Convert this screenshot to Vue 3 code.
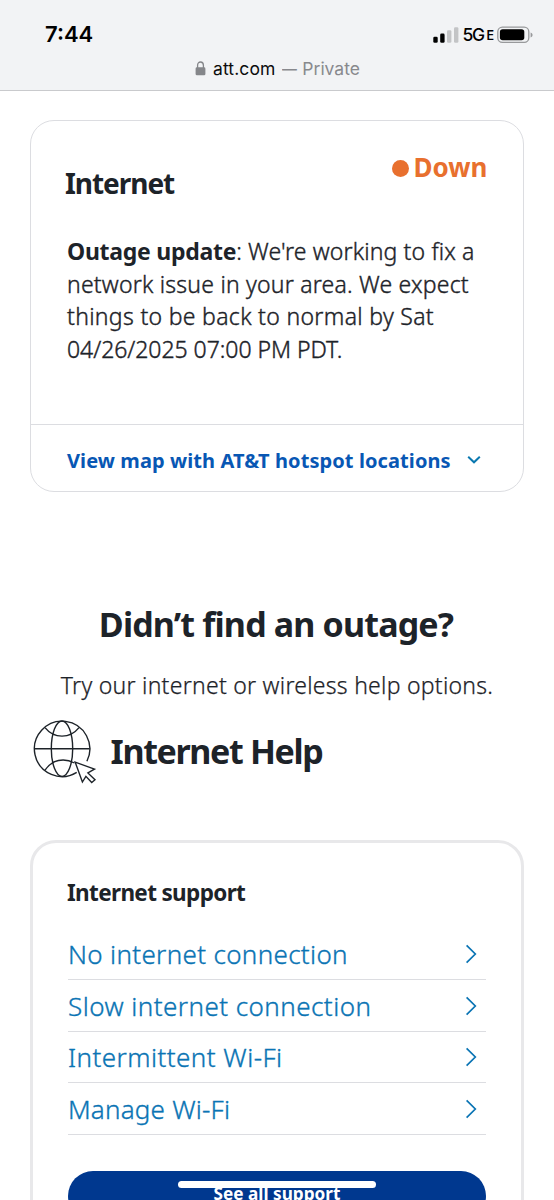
<script setup>
const links = [
  { label: 'No internet connection', cls: 'l1' },
  { label: 'Slow internet connection', cls: 'l2' },
  { label: 'Intermittent Wi-Fi', cls: 'l3' },
  { label: 'Manage Wi-Fi', cls: 'l4' },
]
</script>

<template>
  <div class="phone">
    <header class="top">
      <div class="status">
        <span class="time">7:44</span>
        <div class="indicators">
          <svg class="signal" width="26" height="18" viewBox="0 0 26 18">
            <rect x="0.3" y="10.7" width="4.4" height="6" rx="1.3" fill="#000" />
            <rect x="7.2" y="7.6" width="4.4" height="9.1" rx="1.3" fill="#000" />
            <rect x="14" y="4.3" width="4.4" height="12.4" rx="1.3" fill="#c3c4c6" />
            <rect x="21" y="1.2" width="4.4" height="15.5" rx="1.3" fill="#c3c4c6" />
          </svg>
          <span class="net">5G</span><span class="net-e">E</span>
          <svg class="battery" width="37" height="18" viewBox="0 0 37 18">
            <rect x="0.8" y="1.2" width="31" height="15.2" rx="4.6" fill="none" stroke="#98999b" stroke-width="1.3" />
            <rect x="2.9" y="3.3" width="24.4" height="11" rx="2.8" fill="#000" />
            <path d="M33.6 6.4c2.6.7 2.6 4.3 0 5z" fill="#98999b" />
          </svg>
        </div>
      </div>
      <div class="address">
        <svg class="lock" width="11" height="15" viewBox="0 0 11 15">
          <path d="M2.6 7V4.2C2.6 2.2 3.8 1 5.5 1s2.9 1.2 2.9 3.2V7" fill="none" stroke="#85868a" stroke-width="1.3" />
          <rect x="0.6" y="6.3" width="9.8" height="8" rx="1.4" fill="#85868a" />
        </svg>
        <span class="host">att.com</span><span class="private"><span class="dash">—</span> Private</span>
      </div>
    </header>

    <section class="card outage">
      <div class="outage-body">
        <div class="outage-head">
          <h2>Internet</h2>
          <div class="state"><i class="dot"></i><span>Down</span></div>
        </div>
        <p class="msg">
          <span class="ln"><b>Outage update</b><span class="t1">: We're working to fix a</span></span>
          <span class="ln t2">network issue in your area. We expect</span>
          <span class="ln t3">things to be back to normal by Sat</span>
          <span class="ln t4">04/26/2025 07:00 PM PDT.</span>
        </p>
      </div>
      <a class="map">
        <span>View map with AT&amp;T hotspot locations</span>
        <svg width="14" height="10" viewBox="0 0 14 10">
          <path d="M1.2 1.8 7 7.3l5.8-5.5" fill="none" stroke="#0a78b0" stroke-width="2" />
        </svg>
      </a>
    </section>

    <h1>Didn’t find an outage?</h1>
    <p class="sub">Try our internet or wireless help options.</p>

    <div class="help">
      <svg width="66" height="66" viewBox="0 0 66 66" fill="none" stroke="#1d2329" stroke-width="1.4">
        <path d="M53.9 43.2A27.7 27.7 0 1 0 43.7 54.4" />
        <path d="M1.3 30.7h55.4" />
        <ellipse cx="29" cy="30.7" rx="10.7" ry="27.7" />
        <path d="M12 9.6C21 20.9 37 20.9 46 9.6" />
        <path d="M12 52.2C19 41.500 31 39.500 41.500 45" />
        <path d="M42.200 44.200 61.500 51.200 54.900 54.900 62 61.700 58.700 64.500 52.900 58.300 49.400 64Z" />
      </svg>
      <h3>Internet Help</h3>
    </div>

    <section class="card support">
      <h4>Internet support</h4>
      <ul>
        <li v-for="l in links" :key="l.label">
          <span :class="l.cls">{{ l.label }}</span>
          <svg width="12" height="20" viewBox="0 0 12 20">
            <path d="M1.6 1.4 10.300 10 1.600 18.600" fill="none" stroke="#0a74b4" stroke-width="1.7" />
          </svg>
        </li>
      </ul>
      <div class="see-all">See all support</div>
    </section>

    <div class="home-bar"></div>
  </div>
</template>

<style>
body { background: #fff; }
</style>

<style scoped>
.phone {
  position: relative;
  width: 554px;
  height: 1200px;
  overflow: hidden;
  background: #fff;
  color: #1d2329;
  font-family: "Noto Sans", "Open Sans", sans-serif;
}
h1, h2, h3, h4, p, ul { margin: 0; padding: 0; font-weight: 700; }
.top {
  height: 90px;
  border-bottom: 1px solid #c9cacd;
  background: #f2f3f5;
  font-family: Inter, sans-serif;
}
.status {
  display: flex;
  justify-content: space-between;
  padding: 20px 20px 0 45px;
  height: 28px;
  line-height: 28px;
  color: #000;
}
.time { font-size: 22px; font-weight: 600; letter-spacing: 0; }
.indicators { display: flex; align-items: center; height: 29px; }
.signal { margin-right: 3px; }
.net { font-size: 17.5px; font-weight: 500; letter-spacing: -1.2px; padding-top: 1px; }
.net-e { font-size: 12.5px; font-weight: 600; margin: 3px 3px 0 2.5px; }
.address {
  display: flex;
  align-items: center;
  padding: 7px 0 0 195px;
  height: 27px;
  font-size: 17.5px;
}
.lock { margin-right: 7px; margin-top: -1px; }
.host { color: #0b0b0c; letter-spacing: 0.1px; }
.private { color: #88898d; margin-left: 7px; }
.dash { display: inline-block; width: 15px; transform: scaleX(0.85); transform-origin: left; }

.card { margin: 0 30px; box-sizing: border-box; border-style: solid; }
.outage {
  margin-top: 29px;
  height: 372px;
  border-width: 1.5px;
  border-color: #dcdde1;
  border-radius: 24px;
}
.outage-body { height: 303px; box-sizing: border-box; padding: 31px 36px 0 34px; }
.outage-head { display: flex; justify-content: space-between; height: 45px; }
h2 { margin-top: 16px; font-size: 28px; line-height: 30px; letter-spacing: -1.05px; }
.state { display: flex; height: 30px; color: #e8702e; font-size: 26px; font-weight: 700; line-height: 31px; letter-spacing: 0; }
.dot { width: 17px; height: 17px; border-radius: 50%; background: #e8702e; margin: 7.5px 5px 0 0; }
.state span { margin-right: -0.5px; }
.msg { margin-top: 38px; padding-left: 2px; font-size: 23px; line-height: 32.5px; font-weight: 300; }
.ln { display: block; white-space: nowrap; -webkit-text-stroke: 0.4px currentColor; }
.ln b { font-weight: 700; letter-spacing: -0.27px; -webkit-text-stroke: 0; }
.t1 { letter-spacing: 0.14px; }
.t2 { letter-spacing: 0.21px; }
.t3 { letter-spacing: 0.32px; }
.t4 { letter-spacing: -0.04px; }
.map {
  display: flex;
  align-items: center;
  height: 66px;
  box-sizing: border-box;
  padding: 5px 36px 0;
  border-top: 1.5px solid #dcdde1;
  color: #0857b4;
  font-size: 20px;
  font-weight: 700;
  letter-spacing: 0.09px;
}
.map svg { margin-left: 16.5px; }

h1 { margin-top: 110px; font-size: 34px; line-height: 45px; text-align: center; letter-spacing: -0.84px; padding-right: 2px; }
.sub { margin-top: 22.5px; font-size: 23px; line-height: 30px; font-weight: 300; text-align: center; letter-spacing: 0.26px; -webkit-text-stroke: 0.25px currentColor; }
.help { display: flex; margin: 18px 0 0 33px; height: 66px; }
h3 { margin-left: 11.5px; font-size: 34px; line-height: 67px; letter-spacing: -1.35px; }

.support {
  margin-top: 56.5px;
  height: 420px;
  border-width: 3px;
  border-color: #e8e8ea;
  border-radius: 26px;
  padding: 35px 35px 0;
}
h4 { margin-left: -1px; font-size: 22.5px; line-height: 30px; letter-spacing: -0.65px; }
ul { list-style: none; margin-top: 20px; }
li {
  display: flex;
  align-items: center;
  justify-content: space-between;
  height: 51.8px;
  box-sizing: border-box;
  border-bottom: 1.5px solid #dcdde1;
  padding-right: 9px;
  color: #0a74b4;
  font-size: 26px;
  font-weight: 300;
  -webkit-text-stroke: 0.35px currentColor;
}
li span { padding-top: 1px; }
li svg { margin-top: 1px; }
.l1 { letter-spacing: 0.33px; }
.l2 { letter-spacing: 0.45px; }
.l3 { letter-spacing: 0.45px; }
.l4 { letter-spacing: 0.2px; }
.see-all {
  margin-top: 36px;
  height: 50px;
  border-radius: 25px;
  background: #00388f;
  color: #fff;
  font-size: 17.2px;
  font-weight: 700;
  line-height: 46px;
  text-align: center;
}
.home-bar {
  position: absolute;
  left: 178px;
  top: 1180.5px;
  width: 198px;
  height: 7.5px;
  border-radius: 4px;
  background: #fff;
}
</style>
